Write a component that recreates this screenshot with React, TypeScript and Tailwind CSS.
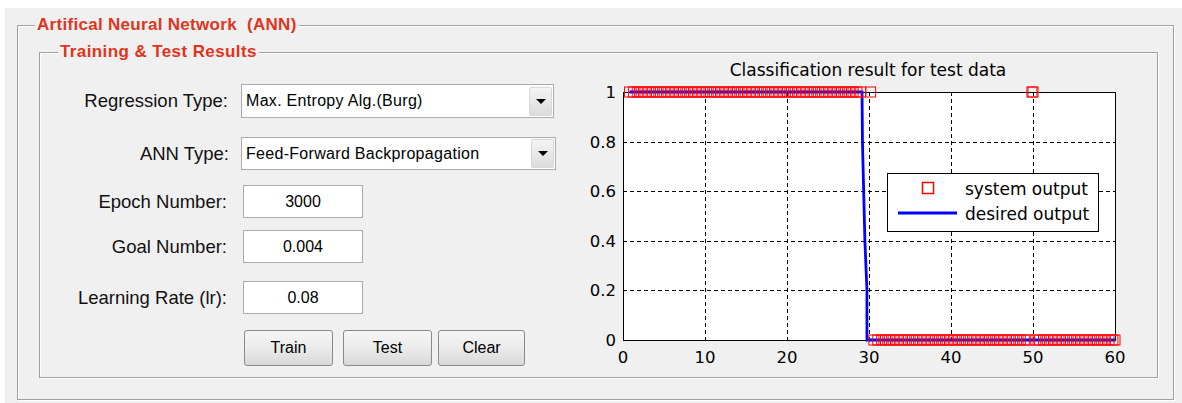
import React from 'react'

const X0 = 53
const XS = 8.2
const Y0 = 279
const YS = 248

const px = (x: number) => X0 + x * XS
const py = (y: number) => Y0 - y * YS

// classifier output: 1 for the first class, 0 for the second, one miss at 50
const points: [number, number][] = []
for (let x = 0.8; x <= 29.05; x += 0.47) points.push([x, 1])
points.push([30.2, 1])
for (let x = 30.6; x <= 60.05; x += 0.47) points.push([x, Math.abs(x - 50) < 0.3 ? 1 : 0])
points.push([50, 1])
points.push([60, 0])

const desired: [number, number][] = [
  [0.8, 1],
  [29.15, 1],
  [29.2, 0.8],
  [29.5, 0.4],
  [29.75, 0.2],
  [29.75, 0],
  [60, 0],
]

function ResultChart() {
  const xt = [0, 10, 20, 30, 40, 50, 60]
  const yt = [0, 0.2, 0.4, 0.6, 0.8, 1]
  return (
    <svg width={580} height={310} className="block" style={{ fontFamily: '"DejaVu Sans", Verdana, sans-serif' }}>
      <text x={298} y={15} fontSize={17} textAnchor="middle" fill="#000">
        Classification result for test data
      </text>
      <rect x={X0} y={py(1)} width={px(60) - X0} height={Y0 - py(1)} fill="#fff" />
      {xt.slice(1, -1).map((t) => (
        <line key={'gx' + t} x1={px(t) + 0.5} x2={px(t) + 0.5} y1={py(1)} y2={Y0} stroke="#000" strokeDasharray="4 3" />
      ))}
      {yt.slice(1, -1).map((t) => (
        <line key={'gy' + t} x1={X0} x2={px(60)} y1={Math.round(py(t)) + 0.5} y2={Math.round(py(t)) + 0.5} stroke="#000" strokeDasharray="4 3" />
      ))}
      <rect x={X0 + 0.5} y={py(1) + 0.5} width={px(60) - X0} height={Y0 - py(1)} fill="none" stroke="#000" />
      {xt.map((t) => (
        <text key={'lx' + t} x={px(t)} y={302} fontSize={16.5} textAnchor="middle" fill="#000">
          {t}
        </text>
      ))}
      {yt.map((t) => (
        <text key={'ly' + t} x={46} y={py(t) + 6} fontSize={16.5} textAnchor="end" fill="#000">
          {t}
        </text>
      ))}
      <polyline
        points={desired.map(([x, y]) => `${px(x)},${py(y)}`).join(' ')}
        fill="none"
        stroke="#0000ff"
        strokeWidth={2.8}
      />
      {points.map(([x, y], i) => (
        <rect key={i} x={px(x) - 5} y={py(y) - 5} width={10} height={10} fill="none" stroke="#ff0000" strokeWidth={1} />
      ))}
      <rect x={317.5} y={112.5} width={211} height={58} fill="#fff" stroke="#000" />
      <rect x={352.5} y={121.5} width={11} height={11} fill="none" stroke="#ff0000" strokeWidth={1.5} />
      <text x={395} y={134} fontSize={17} fill="#000">
        system output
      </text>
      <line x1={328} x2={387} y1={152} y2={152} stroke="#0000ff" strokeWidth={2.8} />
      <text x={395} y={159} fontSize={17} fill="#000">
        desired output
      </text>
    </svg>
  )
}

function Select({ value, w }: { value: string; w: string }) {
  return (
    <div className={`flex items-center h-full ${w} bg-white border border-[#acacac] pl-[4px] pr-[1px]`}>
      <span className="flex-1 text-[16px] tracking-[0.3px] text-black">{value}</span>
      <span className="flex items-center justify-center w-[23px] h-[29px] rounded-[2px] border border-[#d8d8d8] bg-gradient-to-b from-[#f4f4f4] to-[#dcdcdc]">
        <span className="w-0 h-0 border-l-[5px] border-r-[5px] border-t-[5px] border-l-transparent border-r-transparent border-t-black" />
      </span>
    </div>
  )
}

function Field({ label, value, top }: { label: string; value: string; top: string }) {
  return (
    <div className={`flex items-center h-[33px] ${top}`}>
      <label className="w-[187px] text-right text-[18.5px] text-[#111]">{label}</label>
      <div className="ml-[16px] w-[120px] h-[33px] flex items-center justify-center bg-white border border-[#adadad] text-[16px] text-black">
        {value}
      </div>
    </div>
  )
}

function Btn({ children, w }: { children: React.ReactNode; w: string }) {
  return (
    <button className={`${w} h-[36px] rounded-[3px] border border-[#8a8a8a] bg-gradient-to-b from-[#f6f6f6] via-[#ebebeb] to-[#d8d8d8] text-[16px] text-black`}>
      {children}
    </button>
  )
}

export default function App() {
  return (
    <div className="w-[1182px] h-[403px] bg-white pt-[8px] pl-[5px] overflow-hidden" style={{ fontFamily: '"Liberation Sans", Arial, sans-serif' }}>
      <div className="w-full h-full bg-[#f0f0f0] pt-[8px] pl-[12px]">
        <fieldset className="w-[1157px] h-[384px] border border-[#a0a0a0] shadow-[1px_1px_0_#fff,inset_1px_1px_0_#fff]">
          <legend className="ml-[17px] px-[2px] bg-[#f0f0f0] text-[17px] leading-[18px] tracking-[0.3px] font-bold text-[#e2341d]">
            Artifical Neural Network&nbsp; (ANN)
          </legend>
          <fieldset className="ml-[21px] mt-[9px] w-[1119px] h-[335px] border border-[#a0a0a0] shadow-[1px_1px_0_#fff,inset_1px_1px_0_#fff]">
            <legend className="ml-[18px] px-[2px] bg-[#f0f0f0] text-[17px] leading-[18px] tracking-[0.4px] font-bold text-[#e2341d]">
              Training &amp; Test Results
            </legend>
            <div className="flex">
              <div className="w-[516px] pt-[23px]">
                <div className="flex items-center h-[34px]">
                  <label className="w-[188px] text-right text-[18.5px] text-[#111]">Regression Type:</label>
                  <div className="ml-[13px] h-full">
                    <Select value="Max. Entropy Alg.(Burg)" w="w-[313px]" />
                  </div>
                </div>
                <div className="flex items-center h-[33px] mt-[19px]">
                  <label className="w-[189px] text-right text-[18.5px] text-[#111]">ANN Type:</label>
                  <div className="ml-[12px] h-full">
                    <Select value="Feed-Forward Backpropagation" w="w-[315px]" />
                  </div>
                </div>
                <Field label="Epoch Number:" value="3000" top="mt-[15px]" />
                <Field label="Goal Number:" value="0.004" top="mt-[12px]" />
                <Field label="Learning Rate (lr):" value="0.08" top="mt-[18px]" />
                <div className="flex mt-[16px] ml-[204px]">
                  <Btn w="w-[89px]">Train</Btn>
                  <div className="ml-[10px]">
                    <Btn w="w-[89px]">Test</Btn>
                  </div>
                  <div className="ml-[6px]">
                    <Btn w="w-[87px]">Clear</Btn>
                  </div>
                </div>
              </div>
              <div className="ml-[14px]">
                <ResultChart />
              </div>
            </div>
          </fieldset>
        </fieldset>
      </div>
    </div>
  )
}
